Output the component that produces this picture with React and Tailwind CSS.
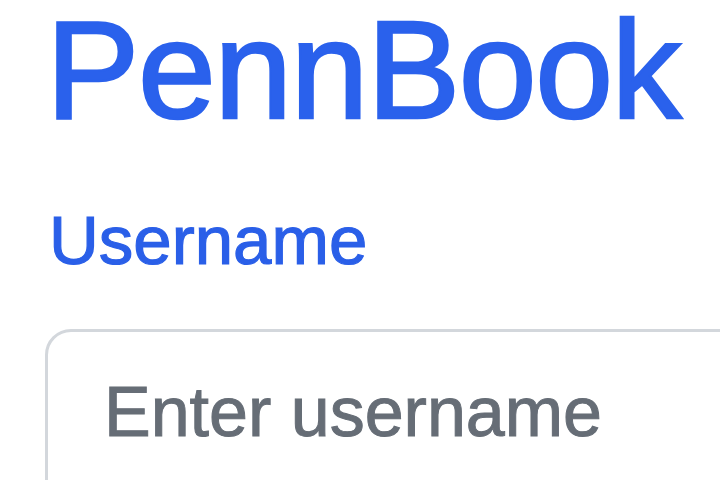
export default function App() {
  return (
    <div
      className="w-[720px] h-[480px] overflow-hidden bg-white"
      style={{ fontFamily: '"Liberation Sans", Arial, Helvetica, sans-serif' }}
    >
      <div className="pl-[46px] pt-0">
        <h1 className="text-[140px] leading-none text-[#2a61ec] font-normal tracking-[-1.5px] [-webkit-text-stroke:2.5px_#2a61ec]">
          PennBook
        </h1>
        <label className="block mt-[66px] ml-[3px] text-[69px] leading-none text-[#2a5fe8] [-webkit-text-stroke:1.2px_#2a5fe8]">
          Username
        </label>
        <div className="mt-[54px] -ml-[1px] w-[800px] h-[200px] border-[3px] border-[#d3d7dc] rounded-[26px] pt-[28px] pl-[56px]">
          <input
            type="text"
            placeholder="Enter username"
            className="w-full bg-transparent outline-none text-[70px] leading-[1.5] text-[#5f6670] placeholder:text-[#666d76] placeholder:[-webkit-text-stroke:1px_#666d76]"
          />
        </div>
      </div>
    </div>
  );
}
